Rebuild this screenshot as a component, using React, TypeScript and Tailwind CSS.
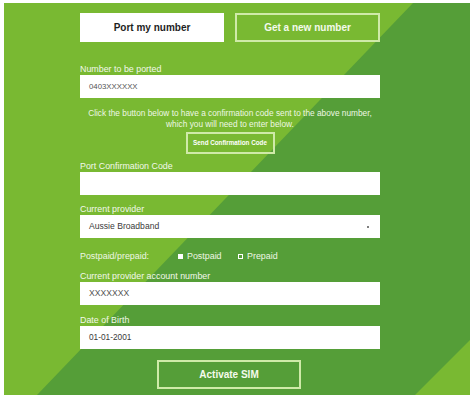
import React from "react";

const font = { fontFamily: '"Liberation Sans", Arial, sans-serif' };

function Label({ children, mt }: { children: React.ReactNode; mt: string }) {
  return (
    <div className={`${mt} h-[10px] text-[8.9px] leading-[10px] text-[#f2f8ea]`}>{children}</div>
  );
}

function Field({ value, dark, size }: { value?: string; dark?: boolean; size?: string }) {
  return (
    <div
      className={`mt-[1px] flex h-[23px] w-[300px] items-center bg-white px-[9px] ${size ?? "text-[8.3px]"} ${
        dark ? "text-[#3a3a3a]" : "text-[#555555]"
      }`}
    >
      {value}
    </div>
  );
}

export default function App() {
  return (
    <div className="h-[402px] w-[474px] bg-white pt-[3px] pl-[4px]" style={font}>
      <div className="relative h-[392px] w-[466px] overflow-hidden bg-[#79b932]">
        <svg className="absolute inset-0" width="466" height="392" viewBox="0 0 466 392">
          <polygon points="409,0 466,0 466,337 411,392 33,392" fill="#559e38" />
        </svg>
        <div className="relative ml-[76px] flex w-[300px] flex-col pt-[10px]">
          <div className="flex gap-[11px]">
            <div className="flex h-[29px] w-[144px] items-center justify-center bg-white text-[10px] font-bold text-[#1e1e1e]">
              Port my number
            </div>
            <div className="flex h-[29px] w-[145px] items-center justify-center border-2 border-[#cfeaa8] text-[10px] font-bold text-[#f4faec]">
              Get a new number
            </div>
          </div>

          <Label mt="mt-[22px]">Number to be ported</Label>
          <Field value="0403XXXXXX" size="text-[7.8px]" />

          <div className="mt-[10px] text-center text-[8.3px] leading-[11px] text-[#eef7e4]">
            Click the button below to have a confirmation code sent to the above number,
            <br />
            which you will need to enter below.
          </div>
          <div className="mt-[2px] flex justify-center">
            <div className="flex h-[22px] w-[89px] items-center justify-center border-2 border-[#cfeaa8] text-[6.3px] font-bold text-white">
              Send Confirmation Code
            </div>
          </div>

          <Label mt="mt-[7px]">Port Confirmation Code</Label>
          <Field />

          <Label mt="mt-[9px]">Current provider</Label>
          <div className="mt-[1px] flex h-[23px] w-[300px] items-center justify-between bg-white pl-[9px] pr-[11px] text-[8.6px] text-[#3a3a3a]">
            <span>Aussie Broadband</span>
            <span className="h-[2px] w-[2px] rounded-full bg-[#555]" />
          </div>

          <div className="mt-[13px] flex h-[10px] items-center text-[8.9px] leading-[10px] text-[#eef7e4]">
            <span className="w-[98px]">Postpaid/prepaid:</span>
            <span className="h-[5px] w-[5px] bg-white" />
            <span className="ml-[4px] w-[51px]">Postpaid</span>
            <span className="h-[5px] w-[5px] border border-white" />
            <span className="ml-[4px]">Prepaid</span>
          </div>

          <Label mt="mt-[10px]">Current provider account number</Label>
          <Field value="XXXXXXX" size="text-[8.6px]" />

          <Label mt="mt-[10px]">Date of Birth</Label>
          <Field value="01-01-2001" dark />

          <div className="mt-[11px] flex justify-center pr-[2px]">
            <div className="flex h-[29px] w-[144px] items-center justify-center border-2 border-[#cfeaa8] text-[10px] font-bold text-[#f4faec]">
              Activate SIM
            </div>
          </div>
        </div>
      </div>
    </div>
  );
}
